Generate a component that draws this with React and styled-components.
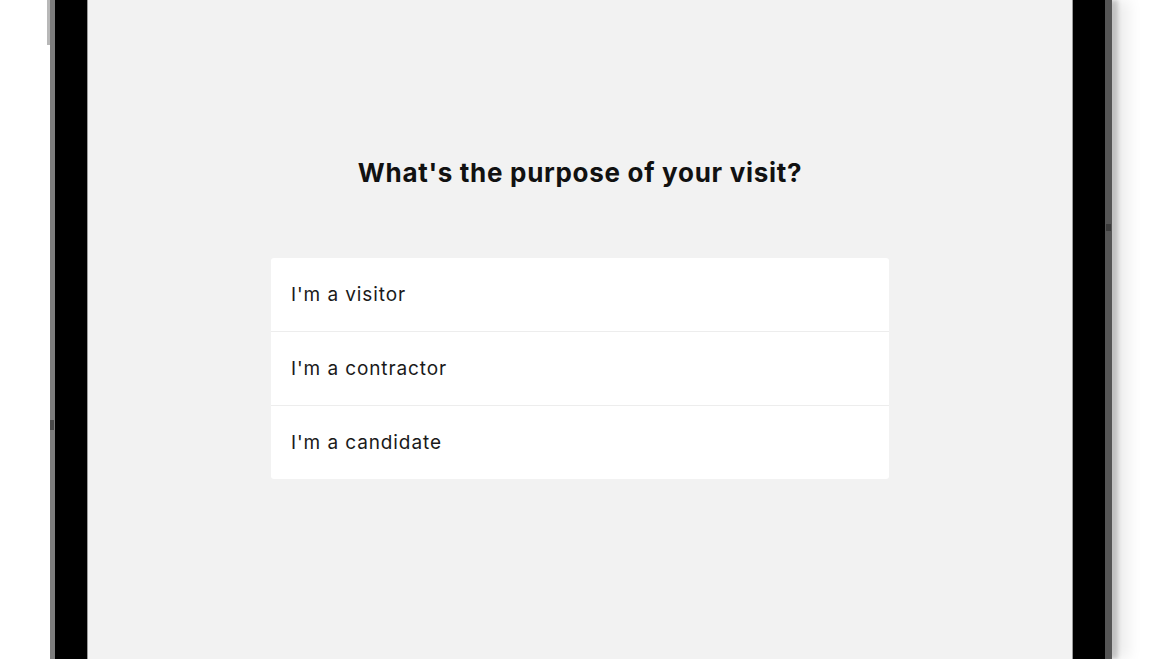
import React from "react";
import styled, { createGlobalStyle } from "styled-components";

const Global = createGlobalStyle`
  html, body {
    margin: 0;
    padding: 0;
    background: #fff;
    font-family: Inter, "Noto Sans", sans-serif;
  }
`;

const Page = styled.div`
  display: flex;
  height: 659px;
  overflow: hidden;
  padding-left: 50px;
`;

const Device = styled.div`
  position: relative;
  display: flex;
  width: 1062px;
  height: 100%;
  background: #000;
  border-left: 5px solid #7d7d7d;
  border-right: 7px solid #555;
  box-shadow: 6px 0 4px rgba(0, 0, 0, 0.18), 16px 0 14px rgba(0, 0, 0, 0.08);
  padding: 0 32px 0 32px;
  box-sizing: border-box;
`;

const SideButton = styled.span`
  position: absolute;
  width: ${(p) => p.w}px;
  height: ${(p) => p.h}px;
  background: ${(p) => p.color};
  ${(p) => (p.side === "left" ? `left: ${p.offset}px;` : `right: ${p.offset}px;`)}
  top: ${(p) => p.top}px;
`;

const Screen = styled.div`
  flex: 1;
  display: flex;
  flex-direction: column;
  align-items: center;
  background: #f2f2f2;
  border-left: 1px solid #9a9a9a;
  border-right: 1px solid #9a9a9a;
  padding-top: 157px;
`;

const Title = styled.h1`
  margin: 0;
  font-size: 26px;
  font-weight: 700;
  color: #111;
  letter-spacing: 0.7px;
`;

const Card = styled.div`
  margin-top: 70px;
  width: 618px;
  background: #fff;
  border-radius: 3px;
  overflow: hidden;
  display: flex;
  flex-direction: column;
`;

const Option = styled.div`
  height: 73px;
  display: flex;
  align-items: center;
  padding-left: 20px;
  font-size: 19px;
  color: #1a1a1a;
  letter-spacing: 0.9px;
  border-top: ${(p) => (p.first ? "none" : "1px solid #ededed")};
`;

const options = ["I'm a visitor", "I'm a contractor", "I'm a candidate"];

export default function App() {
  return (
    <>
      <Global />
      <Page>
        <Device>
          <SideButton side="left" offset={-8} top={0} w={3} h={45} color="#b8b8b8" />
          <SideButton side="left" offset={-5} top={420} w={4} h={10} color="#4a4a4a" />
          <SideButton side="right" offset={-6} top={224} w={5} h={7} color="#3a3a3a" />
          <Screen>
            <Title>What's the purpose of your visit?</Title>
            <Card>
              {options.map((o, i) => (
                <Option key={o} first={i === 0}>
                  {o}
                </Option>
              ))}
            </Card>
          </Screen>
        </Device>
      </Page>
    </>
  );
}
